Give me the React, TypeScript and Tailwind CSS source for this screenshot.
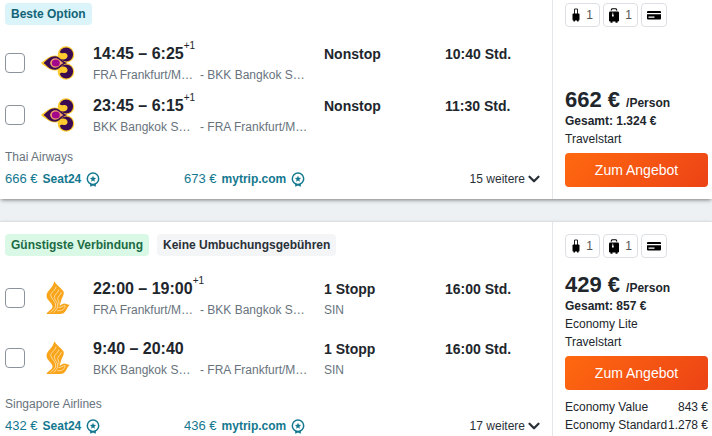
import { ChevronDown } from 'lucide-react';

type Leg = {
  time: string;
  nextDay?: boolean;
  from: string;
  to: string;
  stops: string;
  via?: string;
  duration: string;
};

type Flight = {
  id: string;
  badges: { label: string; className: string }[];
  airline: string;
  logo: 'thai' | 'singapore';
  legs: Leg[];
  offers: { price: string; provider: string }[];
  more: number;
  price: string;
  total: string;
  fare?: string;
  fares: { name: string; price: string }[];
};

const flights: Flight[] = [
  {
    id: 'thai',
    badges: [{ label: 'Beste Option', className: 'bg-[#daf4fa] text-[#136377]' }],
    airline: 'Thai Airways',
    logo: 'thai',
    legs: [
      { time: '14:45 – 6:25', nextDay: true, from: 'FRA Frankfurt/M…', to: 'BKK Bangkok S…', stops: 'Nonstop', duration: '10:40 Std.' },
      { time: '23:45 – 6:15', nextDay: true, from: 'BKK Bangkok S…', to: 'FRA Frankfurt/M…', stops: 'Nonstop', duration: '11:30 Std.' }
    ],
    offers: [
      { price: '666 €', provider: 'Seat24' },
      { price: '673 €', provider: 'mytrip.com' }
    ],
    more: 15,
    price: '662 €',
    total: '1.324 €',
    fares: []
  },
  {
    id: 'singapore',
    badges: [
      { label: 'Günstigste Verbindung', className: 'bg-[#d9f9e6] text-[#1c6b45]' },
      { label: 'Keine Umbuchungsgebühren', className: 'bg-[#f3f5f7] text-[#2a3037]' }
    ],
    airline: 'Singapore Airlines',
    logo: 'singapore',
    legs: [
      { time: '22:00 – 19:00', nextDay: true, from: 'FRA Frankfurt/M…', to: 'BKK Bangkok S…', stops: '1 Stopp', via: 'SIN', duration: '16:00 Std.' },
      { time: '9:40 – 20:40', from: 'BKK Bangkok S…', to: 'FRA Frankfurt/M…', stops: '1 Stopp', via: 'SIN', duration: '16:00 Std.' }
    ],
    offers: [
      { price: '432 €', provider: 'Seat24' },
      { price: '436 €', provider: 'mytrip.com' }
    ],
    more: 17,
    price: '429 €',
    total: '857 €',
    fare: 'Economy Lite',
    fares: [
      { name: 'Economy Value', price: '843 €' },
      { name: 'Economy Standard', price: '1.278 €' }
    ]
  }
];

function ThaiLogo() {
  return (
    <svg width="34" height="34" viewBox="0 0 34 34" aria-hidden="true">
      <g fill="#fdcb2e" stroke="#fdcb2e" strokeWidth="2.2" strokeLinejoin="round">
        <path d="M1.500 17C6 14 8 10.500 14 10.500C19 10.500 21 13 25 17C21 21 19 23.500 14 23.500C8 23.500 6 20 1.500 17Z" />
        <circle cx="25" cy="8.500" r="7.200" />
        <circle cx="25" cy="25.500" r="7.200" />
      </g>
      <g fill="#3b0b52">
        <circle cx="25.200" cy="8.500" r="6.900" />
        <circle cx="25.200" cy="25.500" r="6.900" />
      </g>
      <g fill="#fdcb2e">
        <path d="M18.300 5.500C19 7 20.500 7.500 22.500 7C25 6.500 27 8 26.500 10.500C26 13.300 22.500 14 19.500 13L17.500 10Z" />
        <path d="M18.300 28.500C19 27 20.500 26.500 22.500 27C25 27.500 27 26 26.500 23.500C26 20.700 22.500 20 19.500 21L17.500 24Z" />
      </g>
      <path d="M2.500 17C6 14.500 8 10.300 14 10.300C18.500 10.300 19.500 14.500 26 17C19.500 19.500 18.500 23.700 14 23.700C8 23.700 6 19.500 2.500 17Z" fill="#3b0b52" />
      <path d="M9 17C9.800 14 11.500 12.300 14.500 12.300C17.500 12.300 19 15 22.500 17C19 19 17.500 21.700 14.500 21.700C11.500 21.700 9.800 20 9 17Z" fill="#f5a26b" />
      <ellipse cx="14.800" cy="17" rx="4" ry="3.500" fill="#a3078c" />
    </svg>
  );
}

function SingaporeLogo() {
  return (
    <svg width="24" height="34" viewBox="0 0 24 34" aria-hidden="true">
      <path
        d="M8.300 0.300C10 3.500 15 7 17.500 10.500C18.800 13.500 15.500 17 15 20C14.500 22 14 23.500 13.500 24.500C15.500 24.500 15.500 22.700 18 22.500C20 22.400 20.500 23.500 23.700 24C21.500 25.500 21.500 27 20 29.500C18.500 32 17 33 14 33H0.500C1.500 30 6.800 28.500 6.500 25.500C6.300 22 2.500 20.500 1 17C-1.500 10.500 7 8 8.300 0.300Z"
        fill="#f9a51b"
      />
      <g fill="none" stroke="#ffefcf" strokeWidth="0.700" strokeLinecap="round">
        <path d="M10 6C9.500 9.500 4.500 11.500 4.800 14.500C5.500 18.500 9.800 20 9.800 25C9.700 28 6 29.500 4.500 31.300" />
        <path d="M12.800 9C12.300 12 8 13.500 8.300 16.500C8.700 19.500 12 21 11.800 25C11.500 28 9 29.500 8 31.300" />
        <path d="M15.300 11.500C15 14 11.500 15.500 11.700 17.500C12 19.500 13.200 20.500 13 23" />
        <path d="M13 26.500C16 26.600 16.300 24.800 19 24.500C19.500 26.500 17.500 29.200 14 29.700H11.500" />
      </g>
    </svg>
  );
}

function AwardIcon() {
  return (
    <svg width="14" height="15" viewBox="0 0 14 15" aria-hidden="true">
      <path d="M4.200 11.500V14.800L7 13.600L9.800 14.800V11.500Z" fill="#13788f" />
      <circle cx="7" cy="6.800" r="5.700" fill="#fff" stroke="#13788f" strokeWidth="1.500" />
      <path d="M7 3.700L7.900 5.800L10.100 6L8.400 7.500L8.900 9.700L7 8.500L5.100 9.700L5.600 7.500L3.900 6L6.100 5.800Z" fill="#13788f" />
    </svg>
  );
}

function CabinBagIcon() {
  return (
    <svg width="8" height="14" viewBox="0 0 8 14" aria-hidden="true">
      <path d="M2.500 6V1H5.500V6" fill="none" stroke="#222" strokeWidth="1" />
      <rect x="0.500" y="5.500" width="7" height="7" rx="1" />
      <path d="M1.500 12H3V13.500H1.500ZM5 12H6.500V13.500H5Z" />
    </svg>
  );
}

function SuitcaseIcon() {
  return (
    <svg width="10" height="15" viewBox="0 0 10 15" aria-hidden="true">
      <path d="M2 2.500L3 0.700H7L8 2.500" fill="none" stroke="#000" strokeWidth="1.100" />
      <rect y="3.500" width="10" height="10" rx="1.300" />
      <path d="M1.500 13H3.500V14.700H1.500ZM6.500 13H8.500V14.700H6.500Z" />
      <path d="M3.500 4.500H4.200V6.200L4.700 6.700V8.500H3V6.700L3.500 6.200Z" fill="#fff" />
    </svg>
  );
}

function CardIcon() {
  return (
    <svg width="14" height="9" viewBox="0 0 14 9" aria-hidden="true">
      <rect width="14" height="8.500" rx="1" />
      <path d="M0 2H14V3.200H0ZM1.500 5.500H7.500V6.700H1.500Z" fill="#fff" />
    </svg>
  );
}

function LegRow({ leg, logo, tall }: { leg: Leg; logo: Flight['logo']; tall: boolean }) {
  return (
    <li className={`flex items-center ${tall ? 'h-[60px]' : 'h-[52px]'}`}>
      <input
        type="checkbox"
        aria-label={`${leg.time} ${leg.from}`}
        className="size-5 shrink-0 appearance-none rounded border border-[#8b939c] bg-white checked:bg-[#13788f]"
      />
      <div className="flex w-[66px] shrink-0 items-center justify-center">
        {logo === 'thai' ? <ThaiLogo /> : <SingaporeLogo />}
      </div>
      <div className="ml-0.5 w-[231px] shrink-0">
        <p className="flex h-6 text-base leading-6 font-bold">
          {leg.time}
          {leg.nextDay && <sup className="top-0 text-[10px] leading-2 font-normal">+1</sup>}
        </p>
        <p className="flex text-xs leading-[18px] text-[#68737d]">
          <span className="w-[107px]">{leg.from}</span>
          <span>- {leg.to}</span>
        </p>
      </div>
      <div className="w-[121px] shrink-0">
        <p className="text-sm leading-6 font-bold">{leg.stops}</p>
        <p className="h-[18px] text-xs leading-[18px] text-[#68737d]">{leg.via}</p>
      </div>
      <p className="pb-[18px] text-sm leading-6 font-bold whitespace-nowrap">{leg.duration}</p>
    </li>
  );
}

function FlightCard({ flight }: { flight: Flight }) {
  const chip = 'flex h-6 items-center justify-center rounded border border-[#dce0e4] text-xs text-[#555]';

  return (
    <article className="flex border-t border-[#dcdfe2] bg-white shadow-[0_2px_4px_-1px_rgba(0,0,0,0.5)]">
      <div className="flex min-w-0 flex-1 flex-col pt-3 pb-2.5 pl-[5px]">
        <div className="flex gap-2">
          {flight.badges.map((badge) => (
            <span key={badge.label} className={`rounded px-1.5 text-xs leading-[22px] font-bold ${badge.className}`}>
              {badge.label}
            </span>
          ))}
        </div>
        <ul className="mt-3">
          {flight.legs.map((leg) => (
            <LegRow key={leg.time} leg={leg} logo={flight.logo} tall={Boolean(leg.via)} />
          ))}
        </ul>
        <p className="mt-2 text-xs leading-4 text-[#68737d]">{flight.airline}</p>
        <div className="mt-1 flex h-5 items-center pr-[11px] text-[#13788f]">
          {flight.offers.map((offer) => (
            <a key={offer.provider} href="#" className="flex w-[179px] shrink-0 items-center gap-[5px] text-[13px] leading-5">
              {offer.price}
              <b className="text-xs leading-5">{offer.provider}</b>
              <AwardIcon />
            </a>
          ))}
          <button type="button" className="ml-auto flex items-center text-xs leading-5 whitespace-nowrap text-[#2a3037]">
            {flight.more} weitere
            <ChevronDown className="-mr-0.5 size-[18px]" strokeWidth={3} />
          </button>
        </div>
      </div>

      <aside className="flex w-40 shrink-0 flex-col border-l border-[#e4e7ea] py-3 pr-1 pl-3">
        <div className="flex gap-[3px]">
          <span className={`${chip} w-[35px] gap-1.5`}>
            <CabinBagIcon />1
          </span>
          <span className={`${chip} w-[35px] gap-1.5`}>
            <SuitcaseIcon />1
          </span>
          <span className={`${chip} w-[26px]`}>
            <CardIcon />
          </span>
        </div>
        <div className="mt-auto pt-3 text-xs leading-[18px]">
          <p className="leading-3 font-bold">
            <span className="text-[22px] leading-6">{flight.price}</span>
            <span className="ml-1.5">/Person</span>
          </p>
          <p className="font-bold">Gesamt: {flight.total}</p>
          {flight.fare && <p>{flight.fare}</p>}
          <p>Travelstart</p>
          <button
            type="button"
            className="mt-[5px] block h-[34px] w-full rounded bg-linear-[135deg] from-[#ff690f] to-[#ec4316] text-sm text-white"
          >
            Zum Angebot
          </button>
          {flight.fares.length > 0 && (
            <dl className="mt-2">
              {flight.fares.map((fare) => (
                <div key={fare.name} className="flex justify-between whitespace-nowrap">
                  <dt>{fare.name}</dt>
                  <dd>{fare.price}</dd>
                </div>
              ))}
            </dl>
          )}
        </div>
      </aside>
    </article>
  );
}

export default function App() {
  return (
    <main className="h-screen overflow-hidden bg-[#eef1f4] font-['Liberation_Sans',Arial,sans-serif] text-[#21262c]">
      <div className="-mt-2.5 flex flex-col gap-[22px]">
        {flights.map((flight) => (
          <FlightCard key={flight.id} flight={flight} />
        ))}
      </div>
    </main>
  );
}
